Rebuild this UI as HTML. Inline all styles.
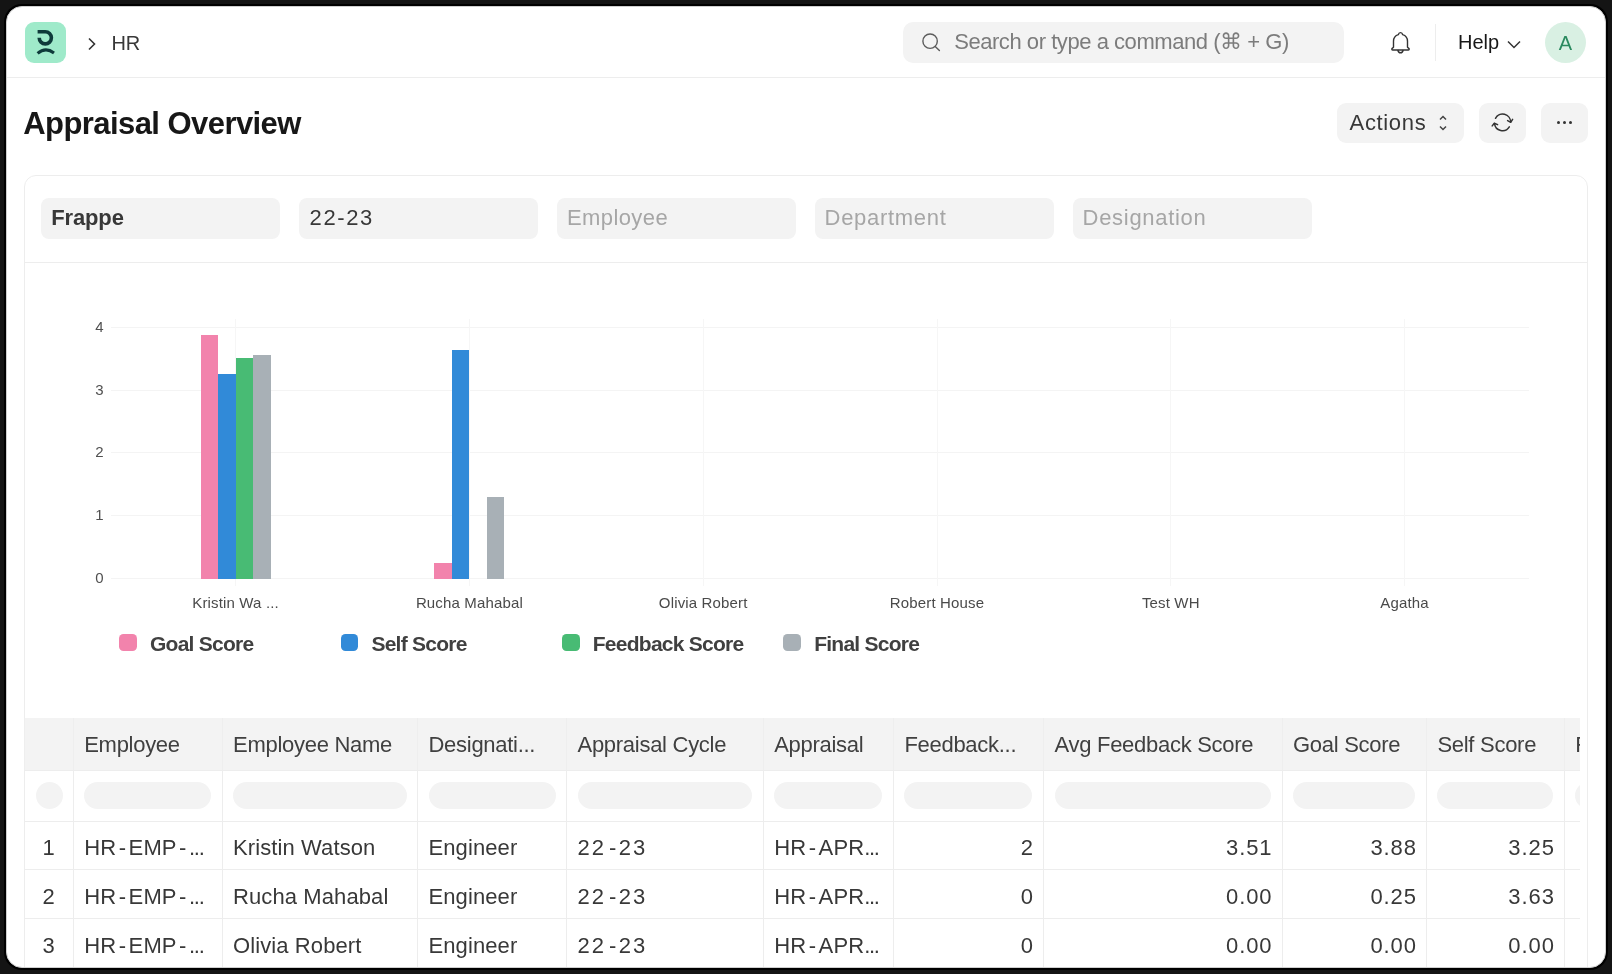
<!DOCTYPE html>
<html>
<head>
<meta charset="utf-8">
<style>
*{box-sizing:border-box;margin:0;padding:0}
html,body{width:1612px;height:974px;overflow:hidden;background:#141414;font-family:"Liberation Sans",sans-serif}
.frame{position:absolute;left:6px;top:6px;width:1600px;height:962px;background:#fff;border:1px solid #cfcfcf;border-radius:16px;box-shadow:0 0 0 2px #000;overflow:hidden}
.a{position:absolute}
.t{position:absolute;line-height:1;white-space:nowrap}
.hl{position:absolute;height:1px;background:#ededed}
.vl{position:absolute;width:1px;background:#ededed}
.gray{background:#f3f3f3}
</style>
</head>
<body>
<div class="frame">
<div id="page" class="a" style="left:-7px;top:-7px;width:1612px;height:974px;will-change:transform">
  <!-- navbar -->
  <div class="a" style="left:25px;top:22px;width:41px;height:41px;border-radius:9px;background:#9feaca">
    <svg width="41" height="41" viewBox="0 0 41 41" style="position:absolute;left:0;top:0">
      <path d="M12.6 9.7 H20.3 A6.1 6.1 0 1 1 14.2 15.8" fill="none" stroke="#0e3a3a" stroke-width="3.6"/>
      <path d="M12.6 31.4 Q20.5 24.6 29 30.9" fill="none" stroke="#0e3a3a" stroke-width="3.1"/>
    </svg>
  </div>
  <svg class="a" style="left:86px;top:36px" width="12" height="16" viewBox="0 0 12 16"><path d="M3 2.5 L8.5 8 L3 13.5" fill="none" stroke="#333" stroke-width="1.6"/></svg>
  <div class="t" style="left:111.4px;top:32.9px;font-size:20px;color:#383838;letter-spacing:0px">HR</div>

  <div class="a gray" style="left:903px;top:22px;width:441px;height:41px;border-radius:10px"></div>
  <svg class="a" style="left:920px;top:32px" width="22" height="22" viewBox="0 0 22 22"><circle cx="10.1" cy="9.2" r="7.2" fill="none" stroke="#5c5c5c" stroke-width="1.4"/><path d="M15.2 14.4 L19.4 18.6" stroke="#5c5c5c" stroke-width="1.4" stroke-linecap="round"/></svg>
  <div class="t" style="left:954.2px;top:31.4px;font-size:22px;color:#7c7c7c;letter-spacing:-0.45px">Search or type a command (⌘ + G)</div>

  <svg class="a" style="left:1386px;top:28px" width="30" height="30" viewBox="0 0 30 30"><path d="M14.5 4.6 C13.4 4.6 12.6 5.4 12.4 6.6 C9.4 7.5 7.5 10 7.5 13.2 V19.3 L6.2 20.4 C5.5 21 5.8 22 6.8 22 H22.2 C23.2 22 23.5 21 22.8 20.4 L21.5 19.3 V13.2 C21.5 10 19.6 7.5 16.6 6.6 C16.4 5.4 15.6 4.6 14.5 4.6 Z" fill="none" stroke="#333" stroke-width="1.4" stroke-linejoin="round"/><path d="M11.8 22 C12.2 23.8 13.2 24.8 14.5 24.8 C15.8 24.8 16.8 23.8 17.2 22" fill="none" stroke="#333" stroke-width="1.4"/></svg>
  <div class="vl" style="left:1435px;top:24px;height:37px"></div>
  <div class="t" style="left:1458px;top:32.1px;font-size:20px;color:#171717">Help</div>
  <svg class="a" style="left:1506px;top:38px" width="16" height="12" viewBox="0 0 16 12"><path d="M2 3.5 L8 9.5 L14 3.5" fill="none" stroke="#333" stroke-width="1.5"/></svg>
  <div class="a" style="left:1545px;top:22px;width:41px;height:41px;border-radius:50%;background:#d9f0e3"></div>
  <div class="t" style="left:1545px;top:32.6px;width:41px;text-align:center;font-size:20px;color:#2a8a5f">A</div>
  <div class="hl" style="left:7px;top:77px;width:1598px"></div>

  <!-- page head -->
  <div class="t" style="left:23.2px;top:107.6px;font-size:31px;font-weight:700;color:#171717;letter-spacing:-0.56px">Appraisal Overview</div>
  <div class="a gray" style="left:1337px;top:102.5px;width:127px;height:40.5px;border-radius:9px"></div>
  <div class="t" style="left:1349.6px;top:111.7px;font-size:22px;color:#383838;letter-spacing:0.65px">Actions</div>
  <svg class="a" style="left:1436px;top:113px" width="14" height="20" viewBox="0 0 14 20"><path d="M4 6.5 L7 3.5 L10 6.5 M4 13.5 L7 16.5 L10 13.5" fill="none" stroke="#444" stroke-width="1.5"/></svg>
  <div class="a gray" style="left:1478.5px;top:102.5px;width:47px;height:40.5px;border-radius:9px"></div>
  <svg class="a" style="left:1488px;top:110px" width="30" height="26" viewBox="0 0 30 26"><path d="M7.5 8.3 A8 8 0 0 1 22.6 12.1 M21.3 16.8 A8 8 0 0 1 6.5 13.4" fill="none" stroke="#333" stroke-width="1.5" stroke-linecap="round"/><path d="M19.6 10.6 L22.7 12.3 L24.6 9.4 M9.6 14.6 L6.3 13.2 L4.2 15.9" fill="none" stroke="#333" stroke-width="1.5" stroke-linecap="round" stroke-linejoin="round"/></svg>
  <div class="a gray" style="left:1541px;top:102.5px;width:47px;height:40.5px;border-radius:9px"></div>
  <div class="a" style="left:1556.5px;top:120.8px;width:3px;height:3px;border-radius:50%;background:#333"></div>
  <div class="a" style="left:1562.6px;top:120.8px;width:3px;height:3px;border-radius:50%;background:#333"></div>
  <div class="a" style="left:1568.7px;top:120.8px;width:3px;height:3px;border-radius:50%;background:#333"></div>

  <!-- card -->
  <div class="a" style="left:24px;top:175px;width:1564px;height:820px;border:1px solid #ededed;border-radius:12px"></div>
  <div class="a gray" style="left:40.5px;top:198px;width:239px;height:40.5px;border-radius:8px"></div>
  <div class="a gray" style="left:298.5px;top:198px;width:239px;height:40.5px;border-radius:8px"></div>
  <div class="a gray" style="left:556.5px;top:198px;width:239px;height:40.5px;border-radius:8px"></div>
  <div class="a gray" style="left:814.5px;top:198px;width:239px;height:40.5px;border-radius:8px"></div>
  <div class="a gray" style="left:1072.5px;top:198px;width:239px;height:40.5px;border-radius:8px"></div>
  <div class="t" style="left:51.3px;top:207.4px;font-size:22px;font-weight:700;color:#383838;letter-spacing:-0.15px">Frappe</div>
  <div class="t" style="left:309.6px;top:207.4px;font-size:22px;color:#383838;letter-spacing:1.6px">22-23</div>
  <div class="t" style="left:567px;top:207.4px;font-size:22px;color:#a6a6a6;letter-spacing:0.4px">Employee</div>
  <div class="t" style="left:824.6px;top:207.4px;font-size:22px;color:#a6a6a6;letter-spacing:0.7px">Department</div>
  <div class="t" style="left:1082.6px;top:207.4px;font-size:22px;color:#a6a6a6;letter-spacing:0.7px">Designation</div>
  <div class="hl" style="left:25px;top:261.5px;width:1562px"></div>

  <!-- CHART -->
  <div class="hl" style="left:111px;top:578.10px;width:1418px;background:#f4f4f4"></div>
<div class="t" style="left:60px;width:43.5px;text-align:right;top:570.10px;font-size:15px;color:#505050">0</div>
<div class="hl" style="left:111px;top:515.25px;width:1418px;background:#f4f4f4"></div>
<div class="t" style="left:60px;width:43.5px;text-align:right;top:507.25px;font-size:15px;color:#505050">1</div>
<div class="hl" style="left:111px;top:452.40px;width:1418px;background:#f4f4f4"></div>
<div class="t" style="left:60px;width:43.5px;text-align:right;top:444.40px;font-size:15px;color:#505050">2</div>
<div class="hl" style="left:111px;top:389.55px;width:1418px;background:#f4f4f4"></div>
<div class="t" style="left:60px;width:43.5px;text-align:right;top:381.55px;font-size:15px;color:#505050">3</div>
<div class="hl" style="left:111px;top:326.70px;width:1418px;background:#f4f4f4"></div>
<div class="t" style="left:60px;width:43.5px;text-align:right;top:318.70px;font-size:15px;color:#505050">4</div>
<div class="vl" style="left:235.10px;top:319px;height:267px;background:#f6f6f6"></div>
<div class="t" style="left:135.60px;width:200px;text-align:center;top:595.40px;font-size:15px;color:#4a4a4a;letter-spacing:0.15px">Kristin Wa ...</div>
<div class="vl" style="left:468.90px;top:319px;height:267px;background:#f6f6f6"></div>
<div class="t" style="left:369.40px;width:200px;text-align:center;top:595.40px;font-size:15px;color:#4a4a4a;letter-spacing:0.15px">Rucha Mahabal</div>
<div class="vl" style="left:702.70px;top:319px;height:267px;background:#f6f6f6"></div>
<div class="t" style="left:603.20px;width:200px;text-align:center;top:595.40px;font-size:15px;color:#4a4a4a;letter-spacing:0.15px">Olivia Robert</div>
<div class="vl" style="left:936.50px;top:319px;height:267px;background:#f6f6f6"></div>
<div class="t" style="left:837.00px;width:200px;text-align:center;top:595.40px;font-size:15px;color:#4a4a4a;letter-spacing:0.15px">Robert House</div>
<div class="vl" style="left:1170.30px;top:319px;height:267px;background:#f6f6f6"></div>
<div class="t" style="left:1070.80px;width:200px;text-align:center;top:595.40px;font-size:15px;color:#4a4a4a;letter-spacing:0.15px">Test WH</div>
<div class="vl" style="left:1404.10px;top:319px;height:267px;background:#f6f6f6"></div>
<div class="t" style="left:1304.60px;width:200px;text-align:center;top:595.40px;font-size:15px;color:#4a4a4a;letter-spacing:0.15px">Agatha</div>
<div class="a" style="left:200.60px;top:334.74px;width:17.5px;height:243.86px;background:#f283ac"></div>
<div class="a" style="left:218.10px;top:374.34px;width:17.5px;height:204.26px;background:#318ad8"></div>
<div class="a" style="left:235.60px;top:358.00px;width:17.5px;height:220.60px;background:#48bb74"></div>
<div class="a" style="left:253.10px;top:355.48px;width:17.5px;height:223.12px;background:#a8b0b6"></div>
<div class="a" style="left:434.40px;top:562.89px;width:17.5px;height:15.71px;background:#f283ac"></div>
<div class="a" style="left:451.90px;top:350.45px;width:17.5px;height:228.15px;background:#318ad8"></div>
<div class="a" style="left:486.90px;top:496.90px;width:17.5px;height:81.70px;background:#a8b0b6"></div>
<div class="a" style="left:119.20px;top:633.6px;width:17.6px;height:17.6px;border-radius:4.5px;background:#f283ac"></div>
<div class="t" style="left:150.00px;top:632.52px;font-size:21px;font-weight:700;color:#404040;letter-spacing:-0.75px">Goal Score</div>
<div class="a" style="left:340.60px;top:633.6px;width:17.6px;height:17.6px;border-radius:4.5px;background:#318ad8"></div>
<div class="t" style="left:371.40px;top:632.52px;font-size:21px;font-weight:700;color:#404040;letter-spacing:-0.75px">Self Score</div>
<div class="a" style="left:562.00px;top:633.6px;width:17.6px;height:17.6px;border-radius:4.5px;background:#48bb74"></div>
<div class="t" style="left:592.80px;top:632.52px;font-size:21px;font-weight:700;color:#404040;letter-spacing:-0.75px">Feedback Score</div>
<div class="a" style="left:783.40px;top:633.6px;width:17.6px;height:17.6px;border-radius:4.5px;background:#a8b0b6"></div>
<div class="t" style="left:814.20px;top:632.52px;font-size:21px;font-weight:700;color:#404040;letter-spacing:-0.75px">Final Score</div>

  <!-- TABLE -->
  <div class="a" style="left:24px;top:717.5px;width:1555.6px;height:256.5px;overflow:hidden">
<div class="a gray" style="left:0;top:0;width:2000px;height:52.5px"></div>
<div class="hl" style="left:0;top:52.00px;width:2000px"></div>
<div class="hl" style="left:0;top:103.00px;width:2000px"></div>
<div class="hl" style="left:0;top:151.70px;width:2000px"></div>
<div class="hl" style="left:0;top:200.40px;width:2000px"></div>
<div class="hl" style="left:0;top:249.10px;width:2000px"></div>
<div class="vl" style="left:-0.50px;top:0;height:52.5px;background:#eeeeee"></div>
<div class="vl" style="left:-0.50px;top:52.50px;height:300px"></div>
<div class="vl" style="left:48.70px;top:0;height:52.5px;background:#eeeeee"></div>
<div class="vl" style="left:48.70px;top:52.50px;height:300px"></div>
<div class="vl" style="left:197.50px;top:0;height:52.5px;background:#eeeeee"></div>
<div class="vl" style="left:197.50px;top:52.50px;height:300px"></div>
<div class="vl" style="left:393.00px;top:0;height:52.5px;background:#eeeeee"></div>
<div class="vl" style="left:393.00px;top:52.50px;height:300px"></div>
<div class="vl" style="left:542.00px;top:0;height:52.5px;background:#eeeeee"></div>
<div class="vl" style="left:542.00px;top:52.50px;height:300px"></div>
<div class="vl" style="left:738.70px;top:0;height:52.5px;background:#eeeeee"></div>
<div class="vl" style="left:738.70px;top:52.50px;height:300px"></div>
<div class="vl" style="left:868.90px;top:0;height:52.5px;background:#eeeeee"></div>
<div class="vl" style="left:868.90px;top:52.50px;height:300px"></div>
<div class="vl" style="left:1019.00px;top:0;height:52.5px;background:#eeeeee"></div>
<div class="vl" style="left:1019.00px;top:52.50px;height:300px"></div>
<div class="vl" style="left:1257.50px;top:0;height:52.5px;background:#eeeeee"></div>
<div class="vl" style="left:1257.50px;top:52.50px;height:300px"></div>
<div class="vl" style="left:1401.90px;top:0;height:52.5px;background:#eeeeee"></div>
<div class="vl" style="left:1401.90px;top:52.50px;height:300px"></div>
<div class="vl" style="left:1539.80px;top:0;height:52.5px;background:#eeeeee"></div>
<div class="vl" style="left:1539.80px;top:52.50px;height:300px"></div>
<div class="t" style="left:60.20px;top:16.18px;font-size:22px;color:#404040;letter-spacing:-0.28px">Employee</div>
<div class="t" style="left:209.00px;top:16.18px;font-size:22px;color:#404040;letter-spacing:-0.28px">Employee Name</div>
<div class="t" style="left:404.50px;top:16.18px;font-size:22px;color:#404040;letter-spacing:-0.28px">Designati...</div>
<div class="t" style="left:553.50px;top:16.18px;font-size:22px;color:#404040;letter-spacing:-0.28px">Appraisal Cycle</div>
<div class="t" style="left:750.20px;top:16.18px;font-size:22px;color:#404040;letter-spacing:-0.28px">Appraisal</div>
<div class="t" style="left:880.40px;top:16.18px;font-size:22px;color:#404040;letter-spacing:-0.28px">Feedback...</div>
<div class="t" style="left:1030.50px;top:16.18px;font-size:22px;color:#404040;letter-spacing:-0.28px">Avg Feedback Score</div>
<div class="t" style="left:1269.00px;top:16.18px;font-size:22px;color:#404040;letter-spacing:-0.28px">Goal Score</div>
<div class="t" style="left:1413.40px;top:16.18px;font-size:22px;color:#404040;letter-spacing:-0.28px">Self Score</div>
<div class="t" style="left:1551.30px;top:16.18px;font-size:22px;color:#404040;letter-spacing:-0.28px">Final Score</div>
<div class="a gray" style="left:11.80px;top:64.50px;width:27.2px;height:27px;border-radius:50%"></div>
<div class="a gray" style="left:60.20px;top:64.50px;width:126.80px;height:27px;border-radius:13.5px"></div>
<div class="a gray" style="left:209.00px;top:64.50px;width:173.50px;height:27px;border-radius:13.5px"></div>
<div class="a gray" style="left:404.50px;top:64.50px;width:127.00px;height:27px;border-radius:13.5px"></div>
<div class="a gray" style="left:553.50px;top:64.50px;width:174.70px;height:27px;border-radius:13.5px"></div>
<div class="a gray" style="left:750.20px;top:64.50px;width:108.20px;height:27px;border-radius:13.5px"></div>
<div class="a gray" style="left:880.40px;top:64.50px;width:128.10px;height:27px;border-radius:13.5px"></div>
<div class="a gray" style="left:1030.50px;top:64.50px;width:216.50px;height:27px;border-radius:13.5px"></div>
<div class="a gray" style="left:1269.00px;top:64.50px;width:122.40px;height:27px;border-radius:13.5px"></div>
<div class="a gray" style="left:1413.40px;top:64.50px;width:115.90px;height:27px;border-radius:13.5px"></div>
<div class="a gray" style="left:1551.30px;top:64.50px;width:213.70px;height:27px;border-radius:13.5px"></div>
<div class="t" style="left:0.00px;width:49.20px;text-align:center;top:119.68px;font-size:22px;color:#383838">1</div>
<div class="t" style="left:60.20px;top:119.68px;font-size:22px;color:#383838;letter-spacing:0.1px">HR<span style="margin:0 2.5px">-</span>EMP<span style="margin:0 2.5px">-</span><span style="letter-spacing:-1.3px">...</span></div>
<div class="t" style="left:209.00px;top:119.68px;font-size:22px;color:#383838;letter-spacing:0.1px">Kristin Watson</div>
<div class="t" style="left:404.50px;top:119.68px;font-size:22px;color:#383838;letter-spacing:0.1px">Engineer</div>
<div class="t" style="left:553.50px;top:119.68px;font-size:22px;color:#383838;letter-spacing:0.1px"><span style="letter-spacing:2px">22</span><span style="margin:0 2.4px 0 3px">-</span><span style="letter-spacing:2px">23</span></div>
<div class="t" style="left:750.20px;top:119.68px;font-size:22px;color:#383838;letter-spacing:0.1px">HR<span style="margin:0 2.5px">-</span>APR<span style="letter-spacing:-1.3px">...</span></div>
<div class="t" style="left:869.40px;width:140.60px;text-align:right;top:119.68px;font-size:22px;color:#383838;letter-spacing:0.9px;padding-right:0">2</div>
<div class="t" style="left:1019.50px;width:229.00px;text-align:right;top:119.68px;font-size:22px;color:#383838;letter-spacing:0.9px;padding-right:0">3.51</div>
<div class="t" style="left:1258.00px;width:134.90px;text-align:right;top:119.68px;font-size:22px;color:#383838;letter-spacing:0.9px;padding-right:0">3.88</div>
<div class="t" style="left:1402.40px;width:128.40px;text-align:right;top:119.68px;font-size:22px;color:#383838;letter-spacing:0.9px;padding-right:0">3.25</div>
<div class="t" style="left:0.00px;width:49.20px;text-align:center;top:168.38px;font-size:22px;color:#383838">2</div>
<div class="t" style="left:60.20px;top:168.38px;font-size:22px;color:#383838;letter-spacing:0.1px">HR<span style="margin:0 2.5px">-</span>EMP<span style="margin:0 2.5px">-</span><span style="letter-spacing:-1.3px">...</span></div>
<div class="t" style="left:209.00px;top:168.38px;font-size:22px;color:#383838;letter-spacing:0.1px">Rucha Mahabal</div>
<div class="t" style="left:404.50px;top:168.38px;font-size:22px;color:#383838;letter-spacing:0.1px">Engineer</div>
<div class="t" style="left:553.50px;top:168.38px;font-size:22px;color:#383838;letter-spacing:0.1px"><span style="letter-spacing:2px">22</span><span style="margin:0 2.4px 0 3px">-</span><span style="letter-spacing:2px">23</span></div>
<div class="t" style="left:750.20px;top:168.38px;font-size:22px;color:#383838;letter-spacing:0.1px">HR<span style="margin:0 2.5px">-</span>APR<span style="letter-spacing:-1.3px">...</span></div>
<div class="t" style="left:869.40px;width:140.60px;text-align:right;top:168.38px;font-size:22px;color:#383838;letter-spacing:0.9px;padding-right:0">0</div>
<div class="t" style="left:1019.50px;width:229.00px;text-align:right;top:168.38px;font-size:22px;color:#383838;letter-spacing:0.9px;padding-right:0">0.00</div>
<div class="t" style="left:1258.00px;width:134.90px;text-align:right;top:168.38px;font-size:22px;color:#383838;letter-spacing:0.9px;padding-right:0">0.25</div>
<div class="t" style="left:1402.40px;width:128.40px;text-align:right;top:168.38px;font-size:22px;color:#383838;letter-spacing:0.9px;padding-right:0">3.63</div>
<div class="t" style="left:0.00px;width:49.20px;text-align:center;top:217.18px;font-size:22px;color:#383838">3</div>
<div class="t" style="left:60.20px;top:217.18px;font-size:22px;color:#383838;letter-spacing:0.1px">HR<span style="margin:0 2.5px">-</span>EMP<span style="margin:0 2.5px">-</span><span style="letter-spacing:-1.3px">...</span></div>
<div class="t" style="left:209.00px;top:217.18px;font-size:22px;color:#383838;letter-spacing:0.1px">Olivia Robert</div>
<div class="t" style="left:404.50px;top:217.18px;font-size:22px;color:#383838;letter-spacing:0.1px">Engineer</div>
<div class="t" style="left:553.50px;top:217.18px;font-size:22px;color:#383838;letter-spacing:0.1px"><span style="letter-spacing:2px">22</span><span style="margin:0 2.4px 0 3px">-</span><span style="letter-spacing:2px">23</span></div>
<div class="t" style="left:750.20px;top:217.18px;font-size:22px;color:#383838;letter-spacing:0.1px">HR<span style="margin:0 2.5px">-</span>APR<span style="letter-spacing:-1.3px">...</span></div>
<div class="t" style="left:869.40px;width:140.60px;text-align:right;top:217.18px;font-size:22px;color:#383838;letter-spacing:0.9px;padding-right:0">0</div>
<div class="t" style="left:1019.50px;width:229.00px;text-align:right;top:217.18px;font-size:22px;color:#383838;letter-spacing:0.9px;padding-right:0">0.00</div>
<div class="t" style="left:1258.00px;width:134.90px;text-align:right;top:217.18px;font-size:22px;color:#383838;letter-spacing:0.9px;padding-right:0">0.00</div>
<div class="t" style="left:1402.40px;width:128.40px;text-align:right;top:217.18px;font-size:22px;color:#383838;letter-spacing:0.9px;padding-right:0">0.00</div>
</div>
</div>
</div>
</body>
</html>
